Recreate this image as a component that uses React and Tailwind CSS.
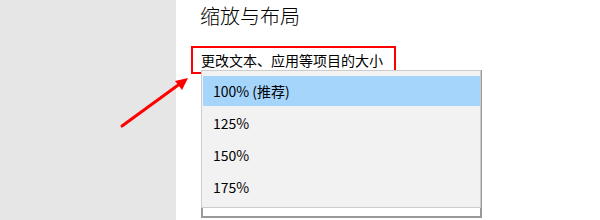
import React from 'react';

const options = ['100% (推荐)', '125%', '150%', '175%'];

const App = () => {
  return (
    <div
      className="flex w-[600px] h-[220px] overflow-hidden bg-white"
      style={{ fontFamily: '"Noto Sans CJK SC", "Noto Sans", sans-serif' }}
    >
      {/* left nav strip */}
      <aside className="w-[176px] shrink-0 bg-[#e6e6e6]" />

      {/* settings content */}
      <main className="relative flex-1 pl-[25px] pt-[2px]">
        <h2 className="-ml-px text-[20px] leading-[28px] font-light text-black">缩放与布局</h2>

        <div className="relative mt-[16px] inline-block h-[28px] text-[14px] leading-[28px] text-black">
          更改文本、应用等项目的大小
          <span className="absolute -left-[10px] -right-[13px] top-0 bottom-0 border-2 border-[#ff0000]" />
        </div>

        {/* combobox with its open list */}
        <div className="relative -mt-[4px] w-[281px] h-[148px] border-2 border-[#999999] bg-white">
          <div className="absolute -left-[2px] -top-[2px] w-[280px] border border-[#cccccc] bg-[#f2f2f2] py-[4px] pl-px pr-0">
            {options.map((o, i) => (
              <div key={o} className="h-[32px] py-px">
                <div
                  className={`h-[30px] pl-[10px] text-[14px] leading-[30px] text-black ${i === 0 ? 'bg-[#a6d5fc]' : ''}`}
                >
                  {o}
                </div>
              </div>
            ))}
          </div>
        </div>
      </main>

      {/* annotation arrow */}
      <svg className="absolute left-0 top-0" width="600" height="220" viewBox="0 0 600 220">
        <line x1="122" y1="126" x2="181" y2="83" stroke="#ff0000" strokeWidth="3" strokeLinecap="round" />
        <polygon points="188,78 175,81 182,90" fill="#ff0000" />
      </svg>
    </div>
  );
};

export default App;
